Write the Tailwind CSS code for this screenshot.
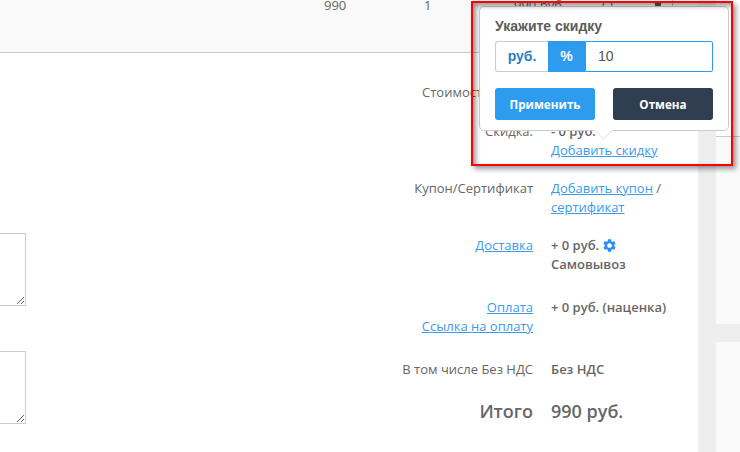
<!DOCTYPE html>
<html lang="ru">
<head>
<meta charset="utf-8">
<script src="https://cdn.jsdelivr.net/npm/@tailwindcss/browser@4"></script>
</head>
<body class="bg-white">
<div class="relative w-[740px] h-[452px] overflow-hidden flex font-['Open_Sans',sans-serif] text-[13px] leading-[19px] text-[#666]">
  <!-- main column -->
  <div class="w-[698px] h-full bg-white flex flex-col">
    <div class="h-[53px] shrink-0 bg-[#f9f9f9] border-b border-[#c8c8c8] flex items-start overflow-hidden">
      <div class="-mt-[4px] pl-[324px] flex items-start">
        <span class="w-[100px]">990</span>
        <span class="w-[90px]">1</span>
        <span class="w-[88px]">990 руб</span>
        <span class="w-[53px]">( )</span>
        <span class="mt-[5px] w-[6px] h-[5px] bg-[#555]"></span>
        <span class="ml-[11px] mt-[4px] w-px h-[6px] bg-[#bbb]"></span>
      </div>
    </div>
    <div class="flex flex-1">
      <!-- left column with notes -->
      <div class="w-[26px] shrink-0 pt-[180px] flex flex-col gap-[45px]">
        <textarea class="block w-[60px] h-[73px] -ml-[34px] shrink-0 border border-[#ccc] bg-white"></textarea>
        <textarea class="block w-[60px] h-[73px] -ml-[34px] shrink-0 border border-[#ccc] bg-white"></textarea>
      </div>
      <!-- totals -->
      <div class="pt-[30px] flex flex-col">
        <div class="flex">
          <div class="w-[507px] pl-[396px]">Стоимость:</div>
        </div>
        <div class="flex mt-[20px]">
          <div class="w-[507px] text-right">Скидка:</div>
          <div class="ml-[18px]">
            <div class="font-semibold">- 0 руб.</div>
            <a class="block text-[#3a9bec] underline">Добавить скидку</a>
          </div>
        </div>
        <div class="flex mt-[19px]">
          <div class="w-[507px] text-right">Купон/Сертификат</div>
          <div class="ml-[18px] w-[120px]">
            <a class="text-[#3a9bec] underline">Добавить купон</a> /
            <a class="text-[#3a9bec] underline">сертификат</a>
          </div>
        </div>
        <div class="flex mt-[19px]">
          <div class="w-[507px] text-right"><a class="text-[#3a9bec] underline">Доставка</a></div>
          <div class="ml-[18px] font-semibold">
            <div class="flex items-center gap-[4px]">+ 0 руб.
              <svg viewBox="2 2 20 20" class="w-[13px] h-[13px] fill-[#2d8ff0]"><path d="M19.14 12.94c.04-.3.06-.61.06-.94 0-.32-.02-.64-.07-.94l2.03-1.58c.18-.14.23-.41.12-.61l-1.92-3.32c-.12-.22-.37-.29-.59-.22l-2.39.96c-.5-.38-1.03-.7-1.62-.94l-.36-2.54c-.04-.24-.24-.41-.48-.41h-3.84c-.24 0-.43.17-.47.41l-.36 2.54c-.59.24-1.13.57-1.62.94l-2.39-.96c-.22-.08-.47 0-.59.22L2.74 8.87c-.12.21-.08.47.12.61l2.03 1.58c-.05.3-.09.63-.09.94s.02.64.07.94l-2.03 1.58c-.18.14-.23.41-.12.61l1.92 3.32c.12.22.37.29.59.22l2.39-.96c.5.38 1.03.7 1.62.94l.36 2.54c.05.24.24.41.48.41h3.84c.24 0 .44-.17.47-.41l.36-2.54c.59-.24 1.13-.56 1.62-.94l2.39.96c.22.08.47 0 .59-.22l1.92-3.32c.12-.22.07-.47-.12-.61l-2.01-1.58zM12 15.6c-1.98 0-3.6-1.62-3.6-3.6s1.62-3.6 3.6-3.6 3.6 1.62 3.6 3.6-1.62 3.6-3.6 3.6z"/></svg>
            </div>
            <div>Самовывоз</div>
          </div>
        </div>
        <div class="flex mt-[24px]">
          <div class="w-[507px] text-right">
            <a class="block text-[#3a9bec] underline">Оплата</a>
            <a class="block text-[#3a9bec] underline">Ссылка на оплату</a>
          </div>
          <div class="ml-[18px] font-semibold">+ 0 руб. (наценка)</div>
        </div>
        <div class="flex mt-[24px]">
          <div class="w-[507px] text-right">В том числе Без НДС</div>
          <div class="ml-[18px] font-semibold">Без НДС</div>
        </div>
        <div class="flex mt-[20px] text-[18px] leading-[24px] font-semibold">
          <div class="w-[507px] text-right">Итого</div>
          <div class="ml-[18px]">990 руб.</div>
        </div>
      </div>
    </div>
  </div>
  <!-- gutter -->
  <div class="w-[18px] h-full bg-[#eeeeee]"></div>
  <!-- side panels -->
  <div class="flex-1 h-full flex flex-col bg-[#eeeeee]">
    <div class="h-[136px] bg-white"></div>
    <div class="h-[188px] bg-[#fafafa] border-t border-[#ccc]"></div>
    <div class="h-[18px]"></div>
    <div class="flex-1 bg-[#fafafa]"></div>
  </div>

  <!-- popover -->
  <div class="absolute left-[479px] top-[6px] w-[250px] h-[125px] bg-white border border-[#ccc] rounded-[5px] px-[15px] pt-[9px]">
    <div class="font-['Liberation_Sans',sans-serif] font-bold text-[14px] leading-[20px] text-[#5c5c5c]">Укажите скидку</div>
    <div class="mt-[5px] flex h-[31px] w-[218px] font-['Liberation_Sans',sans-serif] text-[14px]">
      <div class="w-[53px] border border-r-0 border-[#ccc] rounded-l-[3px] flex items-center justify-center font-semibold text-[#2a7fc4]">руб.</div>
      <div class="w-[37px] bg-[#2d9cee] flex items-center justify-center font-bold text-white">%</div>
      <input value="10" class="w-[128px] border border-[#2d9cee] bg-white pl-[12px] text-[14px] text-[#555] rounded-r-[2px] outline-none">
    </div>
    <div class="mt-[16px] flex justify-between">
      <button class="w-[100px] h-[32px] bg-[#2d9cee] rounded-[3px] text-white font-bold text-[11.7px]">Применить</button>
      <button class="w-[100px] h-[32px] bg-[#2f3e50] rounded-[3px] text-white font-bold text-[11.7px]">Отмена</button>
    </div>
    <div class="absolute left-[117px] -bottom-[7px] w-[13px] h-[13px] rotate-45 bg-white border-r border-b border-[#e8e8e8]"></div>
  </div>

  <!-- red annotation frame -->
  <div class="absolute left-[471px] top-[1px] w-[262px] h-[165px] border-2 border-[#ff0000] shadow-[3px_3px_5px_rgba(0,0,0,0.4),inset_3px_3px_5px_rgba(0,0,0,0.4)] pointer-events-none"></div>
</div>
</body>
</html>
